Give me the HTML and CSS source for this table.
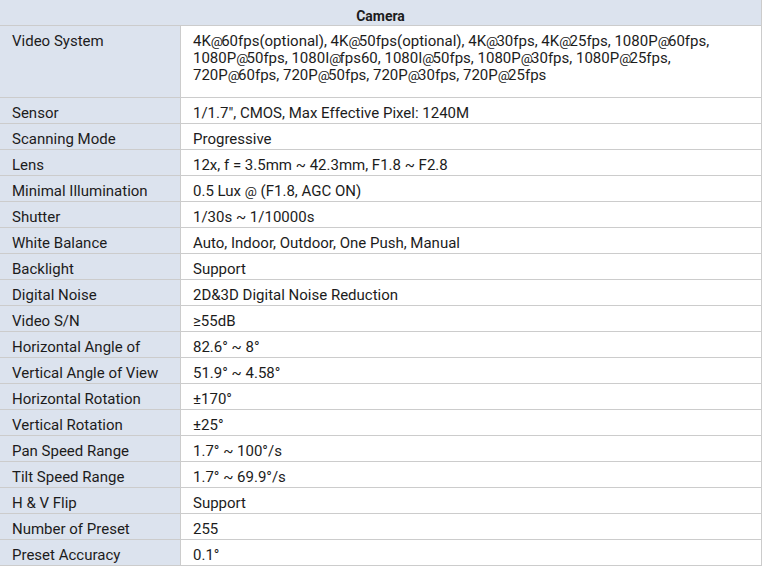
FILE: index.html
```html
<!DOCTYPE html>
<html>
<head>
<meta charset="utf-8">
<link rel="stylesheet" href="styles.css">
</head>
<body>
<div class="spec">
  <div class="head">Camera</div>
  <div class="k tall">Video System</div>
  <div class="v tall">4K<span class="at">@</span>60fps(optional), 4K<span class="at">@</span>50fps(optional), 4K<span class="at">@</span>30fps, 4K<span class="at">@</span>25fps, 1080P<span class="at">@</span>60fps,<br>1080P<span class="at">@</span>50fps, 1080I<span class="at">@</span>fps60, 1080I<span class="at">@</span>50fps, 1080P<span class="at">@</span>30fps, 1080P<span class="at">@</span>25fps,<br>720P<span class="at">@</span>60fps, 720P<span class="at">@</span>50fps, 720P<span class="at">@</span>30fps, 720P<span class="at">@</span>25fps</div>
  <div class="k">Sensor</div><div class="v">1/1.7", CMOS, Max Effective Pixel: 1240M</div>
  <div class="k">Scanning Mode</div><div class="v">Progressive</div>
  <div class="k">Lens</div><div class="v">12x, f = 3.5mm ~ 42.3mm, F1.8 ~ F2.8</div>
  <div class="k">Minimal Illumination</div><div class="v">0.5 Lux <span class="at-s">@</span> (F1.8, AGC ON)</div>
  <div class="k">Shutter</div><div class="v">1/30s ~ 1/10000s</div>
  <div class="k">White Balance</div><div class="v">Auto, Indoor, Outdoor, One Push, Manual</div>
  <div class="k">Backlight</div><div class="v">Support</div>
  <div class="k">Digital Noise</div><div class="v">2D&amp;3D Digital Noise Reduction</div>
  <div class="k">Video S/N</div><div class="v">≥55dB</div>
  <div class="k">Horizontal Angle of</div><div class="v">82.6° ~ 8°</div>
  <div class="k">Vertical Angle of View</div><div class="v">51.9° ~ 4.58°</div>
  <div class="k">Horizontal Rotation</div><div class="v">±170°</div>
  <div class="k">Vertical Rotation</div><div class="v">±25°</div>
  <div class="k">Pan Speed Range</div><div class="v">1.7° ~ 100°/s</div>
  <div class="k">Tilt Speed Range</div><div class="v">1.7° ~ 69.9°/s</div>
  <div class="k">H &amp; V Flip</div><div class="v">Support</div>
  <div class="k">Number of Preset</div><div class="v">255</div>
  <div class="k">Preset Accuracy</div><div class="v">0.1°</div>
</div>
</body>
</html>
```
FILE: styles.css
```css
html, body {
  margin: 0;
  padding: 0;
  background: #ffffff;
}
.spec {
  display: grid;
  grid-template-columns: 180px 580px;
  grid-template-rows: 25px 71px;
  grid-auto-rows: 25px;
  gap: 1px;
  padding: 0 1px 1px 0;
  width: 761px;
  background: #cccccc;
  font-family: Roboto, "Liberation Sans", sans-serif;
  font-size: 15px;
  line-height: 17px;
  color: #1c1c1c;
}
.head {
  grid-column: 1 / 3;
  background: #dce3ee;
  text-align: center;
  font-weight: bold;
  font-size: 14px;
  line-height: 16px;
  padding-top: 8px;
}
.k {
  background: #dce3ee;
  padding: 7px 0 0 12px;
  white-space: nowrap;
}
.v {
  background: #ffffff;
  padding: 7px 0 0 12px;
  white-space: nowrap;
}
.at {
  font-size: 13.5px;
  letter-spacing: -1.8px;
}
.at-s {
  font-size: 13.5px;
}
```
